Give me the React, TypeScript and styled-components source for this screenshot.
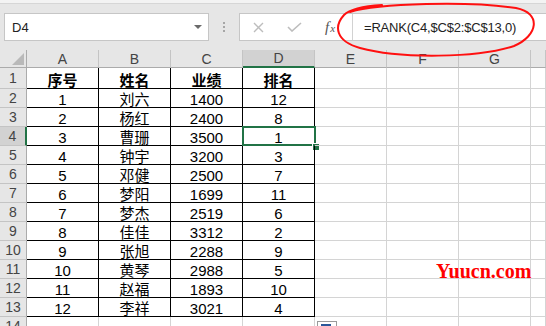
import React from "react";
import styled, { createGlobalStyle } from "styled-components";

const GlobalStyle = createGlobalStyle`
  html, body {
    margin: 0;
    padding: 0;
    background: #fff;
    overflow: hidden;
  }
`;

const Page = styled.div`
  position: relative;
  width: 546px;
  height: 326px;
  overflow: hidden;
  display: flex;
  flex-direction: column;
  font-family: "Liberation Sans", "Noto Sans CJK SC", sans-serif;
`;

const TopStrip = styled.div`
  height: 3px;
  background: #f3f3f3;
  border-bottom: 1px solid #d6d6d6;
`;

const FormulaBar = styled.div`
  height: 48px;
  background: #e6e6e6;
  display: flex;
  align-items: center;
  padding-left: 4px;
`;

const NameBox = styled.div`
  width: 205px;
  height: 28px;
  box-sizing: border-box;
  border: 1px solid #c6c6c6;
  background: #fff;
  display: flex;
  align-items: center;
  justify-content: space-between;
  padding: 0 6px 0 7px;
  font-size: 13px;
  color: #222;
`;

const Caret = styled.span`
  width: 0;
  height: 0;
  border-left: 4px solid transparent;
  border-right: 4px solid transparent;
  border-top: 4px solid #6a6a6a;
`;

const Grip = styled.div`
  width: 30px;
  display: flex;
  flex-direction: column;
  align-items: center;
  gap: 2px;
`;

const Dot = styled.span`
  width: 2px;
  height: 2px;
  background: #a6a6a6;
`;

const FormulaBox = styled.div`
  flex: 1;
  min-width: 0;
  height: 28px;
  box-sizing: border-box;
  border: 1px solid #c6c6c6;
  border-right: none;
  background: #fff;
  display: flex;
  align-items: center;
  overflow: hidden;
`;

const ToolButton = styled.div`
  width: 36px;
  flex-shrink: 0;
  height: 100%;
  display: flex;
  align-items: center;
  justify-content: center;
`;

const Fx = styled.span`
  font-family: "Liberation Serif", serif;
  font-style: italic;
  color: #555;
  font-size: 15px;
  line-height: 1;
  small {
    font-size: 11px;
    margin-left: 1px;
  }
`;

const Divider = styled.span`
  margin-left: 4px;
  width: 1px;
  height: 100%;
  background: #d2d2d2;
`;

const FormulaText = styled.span`
  padding-left: 11px;
  font-size: 13px;
  letter-spacing: -0.2px;
  color: #222;
  white-space: nowrap;
`;

const Sheet = styled.div`
  display: grid;
  grid-template-columns: 27px repeat(7, 72px) 15px;
  grid-template-rows: 18px 21px repeat(13, 19px);
  overflow: hidden;
`;

const Corner = styled.div`
  position: relative;
  background: #e6e6e6;
  border-right: 1px solid #ababab;
  border-bottom: 1px solid #ababab;
  &::after {
    content: "";
    position: absolute;
    right: 2px;
    bottom: 2px;
    border-left: 12px solid transparent;
    border-bottom: 12px solid #b9b9b9;
  }
`;

const ColHeader = styled.div<{ $active?: boolean }>`
  box-sizing: border-box;
  background: ${(p) => (p.$active ? "#d2d2d2" : "#e6e6e6")};
  border-right: 1px solid #c4c4c4;
  border-bottom: ${(p) => (p.$active ? "2px solid #217346" : "1px solid #ababab")};
  display: flex;
  align-items: center;
  justify-content: center;
  font-size: 14px;
  color: #444;
`;

const RowHeader = styled.div<{ $active?: boolean }>`
  box-sizing: border-box;
  background: ${(p) => (p.$active ? "#d2d2d2" : "#e6e6e6")};
  border-right: ${(p) => (p.$active ? "2px solid #217346" : "1px solid #ababab")};
  border-bottom: 1px solid #c4c4c4;
  display: flex;
  align-items: center;
  justify-content: center;
  font-size: 14px;
  color: #444;
`;

const Cell = styled.div<{ $edge?: boolean; $bold?: boolean }>`
  position: relative;
  box-sizing: border-box;
  border-right: 1px solid ${(p) => (p.$edge ? "#000" : "#d4d4d4")};
  border-bottom: 1px solid ${(p) => (p.$edge ? "#000" : "#d4d4d4")};
  display: flex;
  align-items: flex-end;
  justify-content: center;
  font-size: ${(p) => (p.$bold ? "15px" : "15px")};
  font-weight: ${(p) => (p.$bold ? 700 : 400)};
  line-height: 14px;
  color: #000;
  white-space: nowrap;
`;

const Selection = styled.span`
  position: absolute;
  left: -1px;
  top: -1px;
  width: 74px;
  height: 20px;
  box-sizing: border-box;
  border: 2px solid #217346;
`;

const FillHandle = styled.span`
  position: absolute;
  left: 69px;
  top: 16px;
  width: 6px;
  height: 6px;
  background: #217346;
  border-left: 1px solid #fff;
  border-top: 1px solid #fff;
`;

const Annotation = styled.svg`
  position: absolute;
  left: 0;
  top: 0;
  pointer-events: none;
`;

const Watermark = styled.span`
  position: absolute;
  left: 436px;
  top: 261px;
  font-family: "Liberation Serif", serif;
  font-weight: 700;
  font-size: 20px;
  line-height: 20px;
  color: #ff0000;
`;

const QuickIcon = styled.span`
  position: absolute;
  left: 317px;
  top: 321px;
  width: 20px;
  height: 14px;
  box-sizing: border-box;
  border: 1px solid #9a9a9a;
  background: #fff;
  &::after {
    content: "";
    position: absolute;
    left: 3px;
    top: 2px;
    width: 10px;
    height: 8px;
    background: #2b579a;
  }
`;

const columns = ["A", "B", "C", "D", "E", "F", "G", ""];

const rows: (string | number)[][] = [
  ["序号", "姓名", "业绩", "排名"],
  [1, "刘六", 1400, 12],
  [2, "杨红", 2400, 8],
  [3, "曹珊", 3500, 1],
  [4, "钟宇", 3200, 3],
  [5, "邓健", 2500, 7],
  [6, "梦阳", 1699, 11],
  [7, "梦杰", 2519, 6],
  [8, "佳佳", 3312, 2],
  [9, "张旭", 2288, 9],
  [10, "黄琴", 2988, 5],
  [11, "赵福", 1893, 10],
  [12, "李祥", 3021, 4],
  [],
];

const App: React.FC = () => {
  return (
    <Page>
      <GlobalStyle />
      <TopStrip />
      <FormulaBar>
        <NameBox>
          <span>D4</span>
          <Caret />
        </NameBox>
        <Grip>
          <Dot />
          <Dot />
          <Dot />
        </Grip>
        <FormulaBox>
          <ToolButton>
            <svg width="11" height="11" viewBox="0 0 11 11">
              <path d="M1 1 L10 10 M10 1 L1 10" stroke="#bdbdbd" strokeWidth="1.4" fill="none" />
            </svg>
          </ToolButton>
          <ToolButton>
            <svg width="15" height="10" viewBox="0 0 15 10">
              <path d="M1 5 L5 9 L14 1" stroke="#bdbdbd" strokeWidth="1.6" fill="none" />
            </svg>
          </ToolButton>
          <ToolButton>
            <Fx>
              f<small>x</small>
            </Fx>
          </ToolButton>
          <Divider />
          <FormulaText>=RANK(C4,$C$2:$C$13,0)</FormulaText>
        </FormulaBox>
      </FormulaBar>

      <Sheet>
        <Corner />
        {columns.map((c, ci) => (
          <ColHeader key={ci} $active={c === "D"}>
            {c}
          </ColHeader>
        ))}
        {rows.map((row, r) => (
          <React.Fragment key={r}>
            <RowHeader $active={r === 3}>{r + 1}</RowHeader>
            {columns.map((c, ci) => {
              const inTable = r < 13 && ci < 4;
              return (
                <Cell key={ci} $edge={inTable} $bold={r === 0 && inTable}>
                  {inTable ? row[ci] : ""}
                  {r === 3 && c === "D" && (
                    <>
                      <Selection />
                      <FillHandle />
                    </>
                  )}
                </Cell>
              );
            })}
          </React.Fragment>
        ))}
      </Sheet>

      <Annotation width="546" height="64" viewBox="0 0 546 64">
        <path
          d="M350 12 C378 3, 470 1, 516 8 C542 13, 538 36, 514 46 C478 58, 400 59, 360 48 C335 41, 334 26, 344 15 C350 9, 366 6, 382 5"
          stroke="#ff1010"
          strokeWidth="2"
          fill="none"
          strokeLinecap="round"
        />
      </Annotation>
      <Watermark>Yuucn.com</Watermark>
      <QuickIcon />
    </Page>
  );
};

export default App;
